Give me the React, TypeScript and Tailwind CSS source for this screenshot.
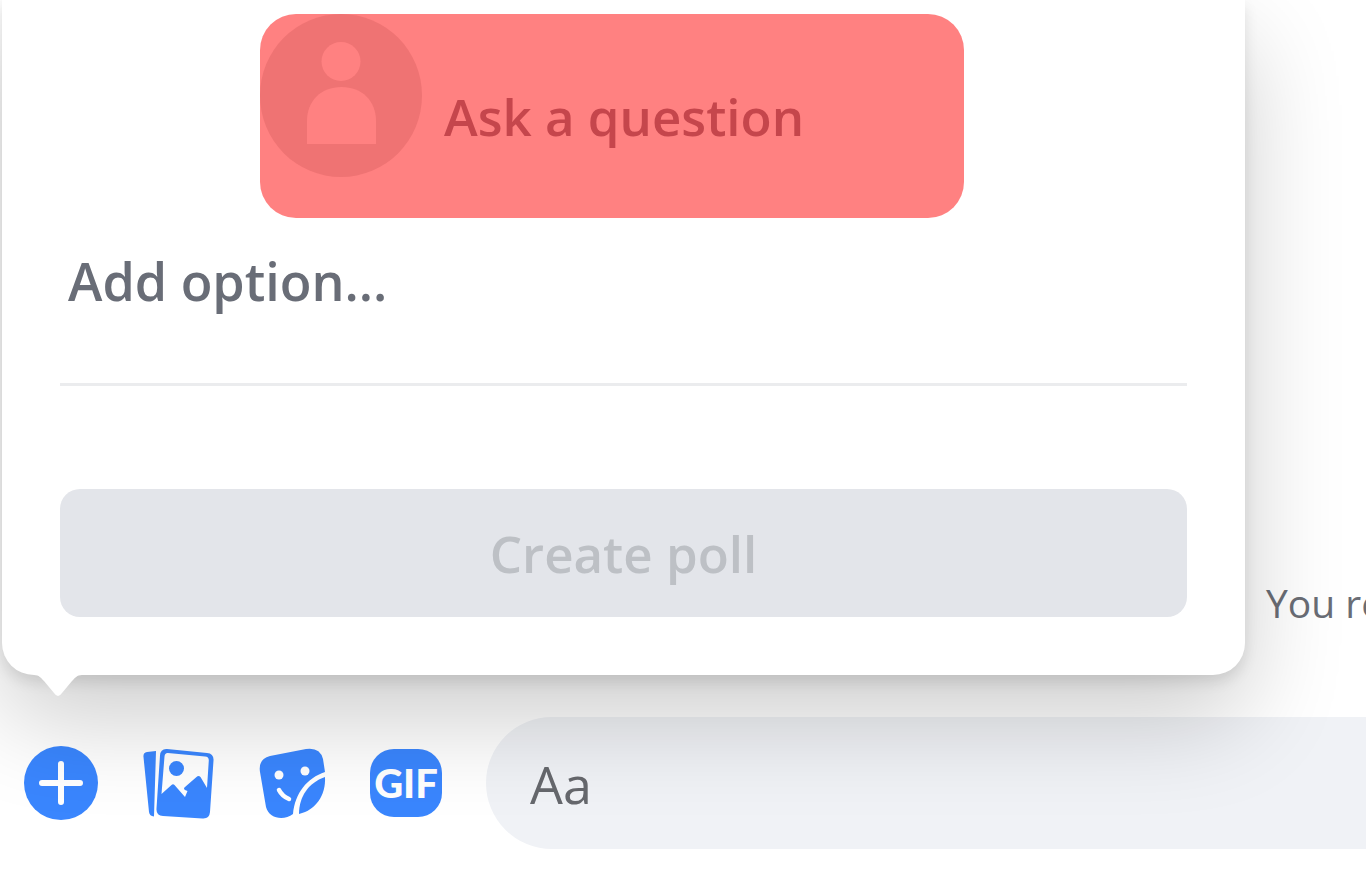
import { useState } from "react";

function AvatarIcon() {
  return (
    <svg viewBox="0 0 162 163" className="h-[163px] w-[162px] shrink-0" aria-hidden="true">
      <ellipse cx="81" cy="81.5" rx="81" ry="81.5" fill="#ef7373" />
      <circle cx="81" cy="47.5" r="19.5" fill="#ff8181" />
      <path d="M47 130V107c0-20 14-34 34.500-34S116 87 116 107v23z" fill="#ff8181" />
    </svg>
  );
}

function PlusIcon() {
  return (
    <svg viewBox="0 0 74 74" className="h-[74px] w-[74px]" aria-hidden="true">
      <circle cx="37" cy="37" r="37" fill="#3a86fe" />
      <path d="M37 18v38M18 37h38" stroke="#fff" strokeWidth="6" strokeLinecap="round" />
    </svg>
  );
}

function PhotosIcon() {
  return (
    <svg viewBox="-1 -1 72 72" className="h-[72px] w-[72px]" aria-hidden="true">
      <path d="M13 3 4 4Q0 4.500.500 9L6 64q.500 4 5 4.500z" fill="#3a86fe" />
      <path
        d="M24 1 64 5q7 .600 6.500 7.500L67 64q-.600 7-7.500 6.500L20 68q-7-.600-6.500-7.500L17 7.500Q17.500.500 24 1z"
        fill="#3a86fe"
      />
      <path
        d="M25 5 62 8.500q4 .400 3.800 4L64 40l-6.500-11q-2-2-4 0L42 39q-2 1.500 0 3l2.500 1-2.500 6L31.500 37q-1.500-1.500-3 0L18.500 46 21.500 8.500Q21.800 4.700 25 5z"
        fill="#fff"
      />
      <circle cx="33.500" cy="20.500" r="7.500" fill="#3a86fe" />
    </svg>
  );
}

function StickerIcon() {
  return (
    <svg viewBox="-1 0 68 72" className="h-[72px] w-[68px]" aria-hidden="true">
      <path
        d="M11 9 47 2q14-2 17 10l2 13C48 31 36 46 34 67 25 74 10 72 7 60L1 25Q-1 12 11 9z"
        fill="#3a86fe"
      />
      <path d="M66 30c1 18-9 33-26 37C40 50 49 36 66 30z" fill="#3a86fe" />
      <circle cx="20" cy="28" r="4.500" fill="#fff" />
      <circle cx="46" cy="24" r="4.500" fill="#fff" />
      <path d="M20 43q3 6 10 9" fill="none" stroke="#fff" strokeWidth="4.500" strokeLinecap="round" />
    </svg>
  );
}

function GifIcon() {
  return (
    <span className="flex h-[68px] w-[72px] items-center justify-center rounded-3xl bg-[#3a86fe] font-['Lato'] text-[40px] leading-none font-black text-white">
      GIF
    </span>
  );
}

export default function App() {
  const [question, setQuestion] = useState("");
  const [option, setOption] = useState("");
  const [message, setMessage] = useState("");

  return (
    <main className="min-h-screen overflow-hidden bg-white font-['Open_Sans','Noto_Sans',sans-serif]">
      <div className="flex items-end">
        <form
          onSubmit={(event) => event.preventDefault()}
          className="relative z-10 ml-0.5 w-[91%] shrink-0 rounded-b-[32px] bg-white px-[58px] pt-3.5 pb-[58px] shadow-[0_43px_100px_rgba(0,0,0,0.2),0_7px_14px_rgba(0,0,0,0.1)]"
        >
          <div className="mr-[223px] ml-[200px] flex h-[204px] items-start overflow-hidden rounded-[36px] bg-[#ff8181]">
            <AvatarIcon />
            <input
              type="text"
              aria-label="Question"
              placeholder="Ask a question"
              value={question}
              onChange={(event) => setQuestion(event.target.value)}
              className="h-full min-w-0 flex-1 bg-transparent pl-[22px] text-[51px] font-semibold text-[#c5464c] outline-none placeholder:text-[#c5464c] placeholder:opacity-100"
            />
          </div>
          <input
            type="text"
            aria-label="Option"
            placeholder="Add option..."
            value={option}
            onChange={(event) => setOption(event.target.value)}
            className="h-[168px] w-full border-b-3 border-[#ebecee] bg-transparent px-2 pb-10 text-[52px] font-semibold text-[#696d77] outline-none placeholder:text-[#696d77] placeholder:opacity-100"
          />
          <button
            type="submit"
            disabled
            className="mt-[103px] flex h-32 w-full items-center justify-center rounded-[20px] bg-[#e3e5ea] text-[51px] font-semibold text-[#bdc0c5]"
          >
            Create poll
          </button>
          <svg viewBox="0 0 48 24" className="absolute top-full left-8 h-6 w-12" aria-hidden="true">
            <path d="M0 0c5 0 7 3 10 6l10 12q4 6 8 0L38 6c3-3 5-6 10-6z" fill="#fff" />
          </svg>
        </form>
        <p className="mb-11 ml-[21px] text-[39px] leading-[56px] whitespace-nowrap text-[#6a6d75]">You re</p>
      </div>

      <div className="mt-[42px] flex h-[132px] items-center pl-6">
        <div className="flex shrink-0 items-center gap-11">
          <button type="button" aria-label="More actions">
            <PlusIcon />
          </button>
          <button type="button" aria-label="Attach photos">
            <PhotosIcon />
          </button>
          <button type="button" aria-label="Choose a sticker">
            <StickerIcon />
          </button>
          <button type="button" aria-label="Choose a GIF">
            <GifIcon />
          </button>
        </div>
        <input
          type="text"
          aria-label="Message"
          placeholder="Aa"
          value={message}
          onChange={(event) => setMessage(event.target.value)}
          className="ml-11 h-full min-w-0 flex-1 rounded-l-full bg-[#f0f2f6] pl-11 text-[52px] text-[#66686d] outline-none placeholder:text-[#66686d] placeholder:opacity-100"
        />
      </div>
    </main>
  );
}
